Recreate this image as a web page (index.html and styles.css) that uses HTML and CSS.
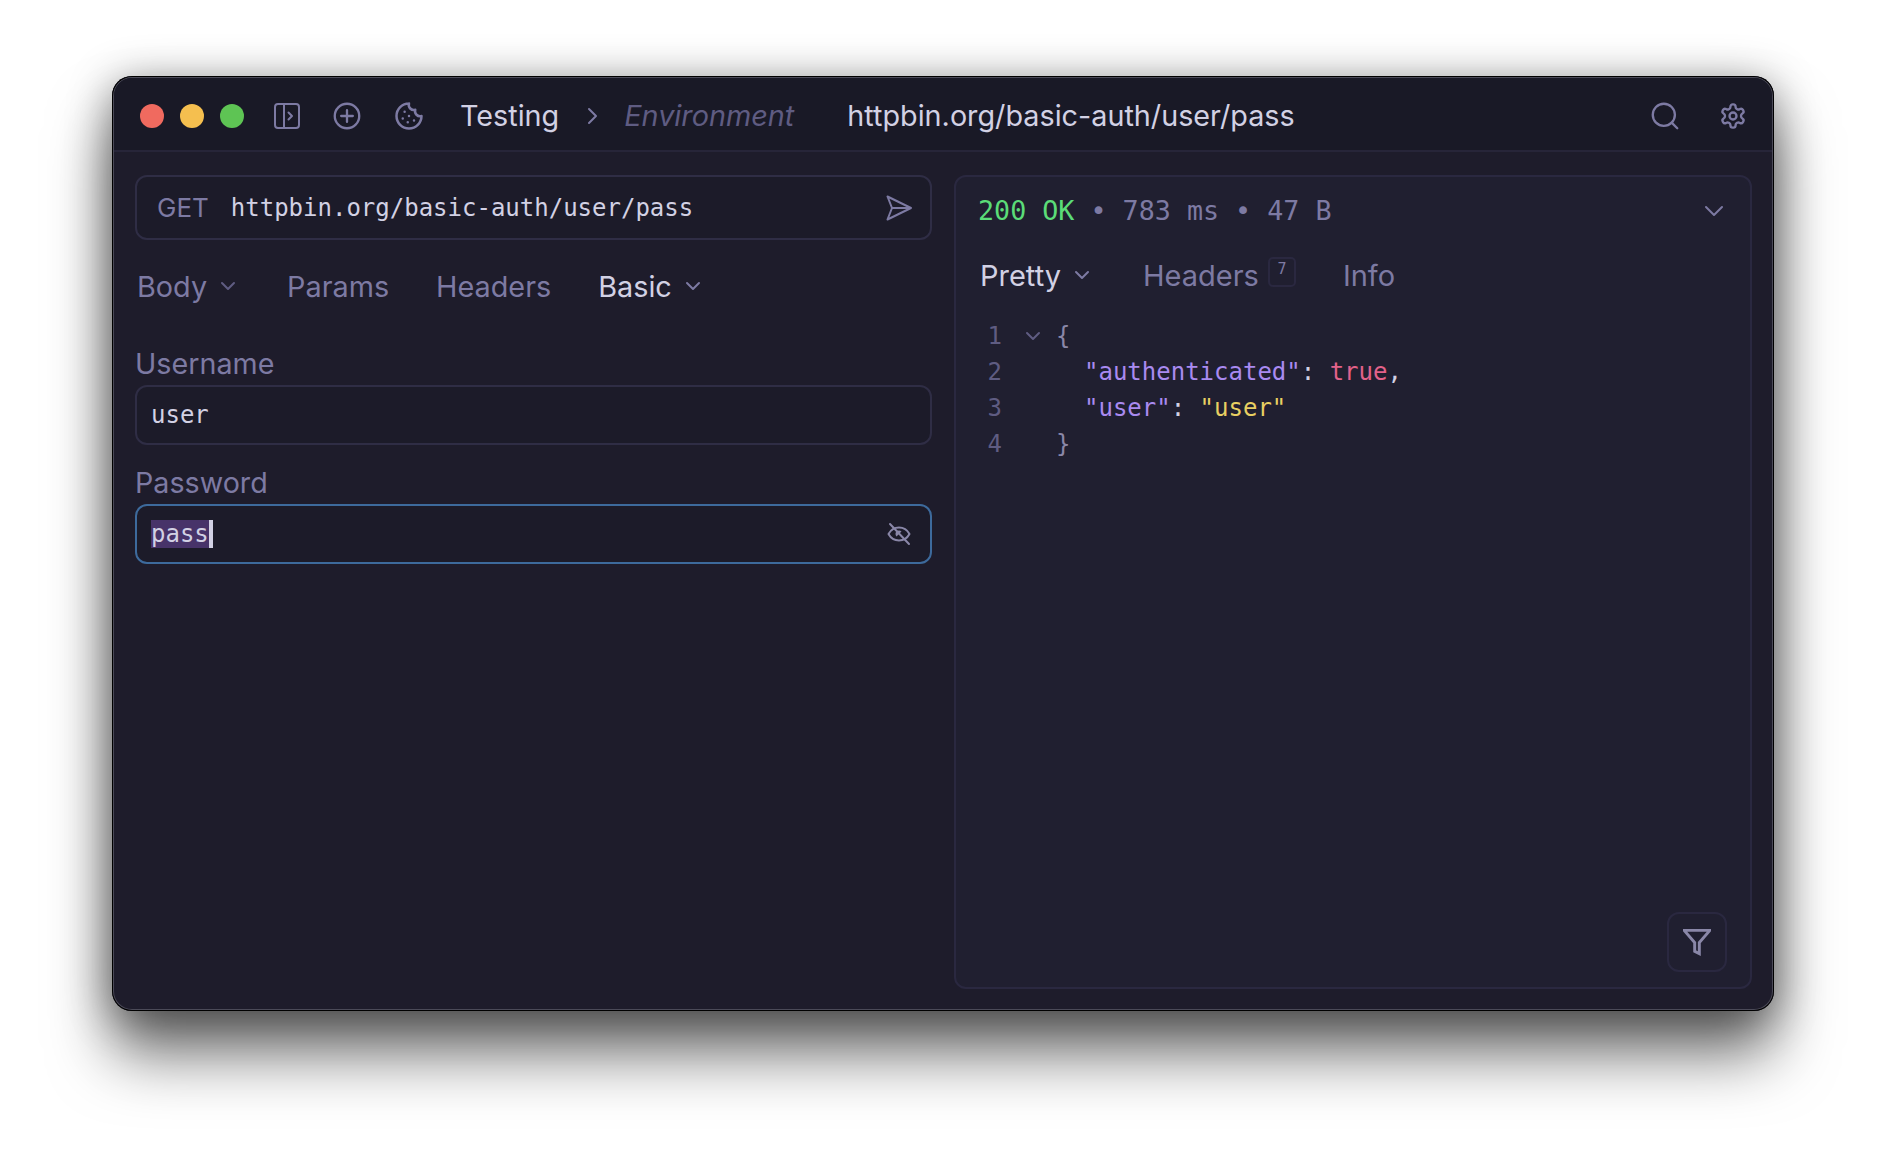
FILE: index.html
```html
<!DOCTYPE html>
<html lang="en">
<head>
  <meta charset="UTF-8" />
  <title>Yaak - Testing</title>
  <link rel="stylesheet" href="styles.css">
</head>
<body>
  <div class="window">
    <!-- Title bar -->
    <header class="titlebar">
      <div class="lights">
        <span class="light red"></span>
        <span class="light yellow"></span>
        <span class="light green"></span>
      </div>
      <svg class="icon icon-panel" viewBox="0 0 26 26"><rect x="1" y="1" width="24" height="24" rx="3"/><path d="M10 1v24M14.500 9.500 18 13l-3.500 3.500"/></svg>
      <svg class="icon icon-plus" viewBox="0 0 24 24"><circle cx="12" cy="12" r="10.500"/><path d="M12 7v10M7 12h10"/></svg>
      <svg class="icon icon-cookie" viewBox="0 0 24 24"><path d="M12 2a10 10 0 1 0 10 10 4 4 0 0 1-5-5 4 4 0 0 1-5-5"/><path d="M8.500 8.500v.01M16 15.500v.01M12 12v.01M11 17v.01M7 14v.01"/></svg>
      <span class="crumb">Testing</span>
      <svg class="icon icon-crumb" viewBox="0 0 12 20"><path d="m2 3 7 7-7 7"/></svg>
      <span class="crumb-env">Environment</span>
      <span class="crumb crumb-url">httpbin.org/basic-auth/user/pass</span>
      <svg class="icon icon-search" viewBox="0 0 24 24"><circle cx="11" cy="11" r="9.500"/><path d="m22.500 22.500-4.800-4.800"/></svg>
      <svg class="icon icon-gear" viewBox="0 0 24 24"><path d="M12.220 2h-.44a2 2 0 0 0-2 2v.18a2 2 0 0 1-1 1.730l-.43.25a2 2 0 0 1-2 0l-.15-.08a2 2 0 0 0-2.730.73l-.22.38a2 2 0 0 0 .73 2.730l.15.1a2 2 0 0 1 1 1.720v.51a2 2 0 0 1-1 1.740l-.15.09a2 2 0 0 0-.73 2.730l.22.38a2 2 0 0 0 2.730.73l.15-.08a2 2 0 0 1 2 0l.43.25a2 2 0 0 1 1 1.730V20a2 2 0 0 0 2 2h.44a2 2 0 0 0 2-2v-.18a2 2 0 0 1 1-1.730l.43-.25a2 2 0 0 1 2 0l.15.08a2 2 0 0 0 2.730-.73l.22-.39a2 2 0 0 0-.73-2.730l-.15-.08a2 2 0 0 1-1-1.740v-.5a2 2 0 0 1 1-1.740l.15-.09a2 2 0 0 0 .73-2.730l-.22-.38a2 2 0 0 0-2.730-.73l-.15.08a2 2 0 0 1-2 0l-.43-.25a2 2 0 0 1-1-1.730V4a2 2 0 0 0-2-2z"/><circle cx="12" cy="12" r="3"/></svg>
    </header>

    <main class="panes">
      <!-- Request side -->
      <section class="request">
        <div class="field url-bar">
          <span class="method">GET</span>
          <span class="mono">httpbin.org/basic-auth/user/pass</span>
          <svg class="icon icon-send" viewBox="0 0 26 26"><path d="M1.500 1.500 6 13 1.500 24.500 25 13ZM6 13h19"/></svg>
        </div>
        <nav class="tabs request-tabs">
          <span class="tab tab-body">Body<svg class="chev" viewBox="0 0 16 10"><path d="m2 2 6 6 6-6"/></svg></span>
          <span class="tab">Params</span>
          <span class="tab">Headers</span>
          <span class="tab active">Basic<svg class="chev" viewBox="0 0 16 10"><path d="m2 2 6 6 6-6"/></svg></span>
        </nav>
        <label class="label label-first">Username</label>
        <div class="field input"><span class="mono">user</span></div>
        <label class="label">Password</label>
        <div class="field input focused">
          <span class="mono"><span class="selected">pass</span><span class="caret"></span></span>
          <svg class="icon icon-eye" viewBox="0 0 24 24"><path d="M1.500 12C4 7.500 7.500 5.500 12 5.500s8 2 10.500 6.500c-2.500 4.500-6 6.500-10.500 6.500S4 16.500 1.500 12Z"/><path class="pupil" d="M12 8.500a3.500 3.500 0 0 0-3.500 3.500c0 1 .4 1.800 1 2.500l5-5c-.7-.6-1.500-1-2.500-1Z"/><path d="m3 2 19 20"/></svg>
        </div>
      </section>

      <!-- Response side -->
      <section class="response">
        <div class="status-row">
          <span class="status"><span class="ok">200 OK</span> • 783 ms • 47 B</span>
          <svg class="chev chev-status" viewBox="0 0 20 12"><path d="m2 2 8 8 8-8"/></svg>
        </div>
        <nav class="tabs response-tabs">
          <span class="tab tab-pretty active">Pretty<svg class="chev" viewBox="0 0 16 10"><path d="m2 2 6 6 6-6"/></svg></span>
          <span class="tab">Headers<span class="badge">7</span></span>
          <span class="tab">Info</span>
        </nav>
        <div class="code">
          <div class="line"><span class="num">1</span><svg class="chev chev-fold" viewBox="0 0 16 10"><path d="m2 2 6 6 6-6"/></svg><span class="punct">{</span></div>
          <div class="line"><span class="num">2</span><span class="indent"></span><span><span class="key">"authenticated"</span><span class="colon">:</span> <span class="bool">true</span><span class="colon">,</span></span></div>
          <div class="line"><span class="num">3</span><span class="indent"></span><span><span class="key">"user"</span><span class="colon">:</span> <span class="str">"user"</span></span></div>
          <div class="line"><span class="num">4</span><span class="gutter"></span><span class="punct">}</span></div>
        </div>
        <button class="filter-btn">
          <svg class="icon icon-filter" viewBox="0 0 24 24"><path d="M23 2H1l9 10.500V20l4 2v-9.500Z"/></svg>
        </button>
      </section>
    </main>
  </div>
</body>
</html>
```

FILE: styles.css
```css
html, body {
  margin: 0;
  height: 100%;
  background: #fff;
}
body {
  padding: 76px 0 0 112px;
  box-sizing: border-box;
  font-family: Inter, "Noto Sans", sans-serif;
  overflow: hidden;
}
.window {
  width: 1662px;
  height: 935px;
  box-sizing: border-box;
  display: flex;
  flex-direction: column;
  border-radius: 20px;
  overflow: hidden;
  background: #1e1c2b;
  box-shadow: inset 0 0 0 1px #000, inset 0 0 0 2px #4b4a58, 0 44px 62px rgba(0,0,0,0.55), 0 6px 44px rgba(0,0,0,0.42);
}
.icon {
  fill: none;
  stroke: #7d7aa3;
  stroke-width: 2;
  stroke-linecap: round;
  stroke-linejoin: round;
  flex: none;
}

/* Title bar */
.titlebar {
  height: 74px;
  flex: none;
  box-sizing: border-box;
  margin: 2px 2px 0;
  padding: 4px 25px 0 26px;
  display: flex;
  align-items: center;
  background: #191926;
  border-bottom: 2px solid #272539;
  border-radius: 18px 18px 0 0;
}
.lights {
  display: flex;
  gap: 16px;
}
.light {
  width: 24px;
  height: 24px;
  border-radius: 50%;
}
.red { background: #f06a5f; }
.yellow { background: #f5bf4f; }
.green { background: #5ec454; }
.icon-panel { width: 26px; height: 26px; margin-left: 30px; }
.icon-plus { width: 28px; height: 28px; margin-left: 33px; }
.icon-cookie { width: 30px; height: 30px; margin-left: 33px; }
.crumb {
  font-size: 28.750px;
  color: #d2d1e4;
  margin: -2px 0 0 36px;
  white-space: nowrap;
}
.icon-crumb { width: 12px; height: 20px; margin-left: 28px; }
.crumb-env {
  font-size: 28.800px;
  font-style: italic;
  color: #5f5c82;
  margin: -2px 0 0 25px;
  white-space: nowrap;
}
.crumb-url { margin-left: 53px; }
.icon-search { width: 28px; height: 28px; margin-left: auto; }
.icon-gear { width: 28px; height: 28px; margin-left: 40px; }

/* Panes */
.panes {
  flex: 1;
  min-height: 0;
  display: grid;
  grid-template-columns: 797px 798px;
  column-gap: 22px;
  padding: 23px 0 22px 23px;
}
.mono {
  font-family: "DejaVu Sans Mono", "Liberation Mono", monospace;
  font-size: 24px;
  color: #d2d1e4;
}
.field {
  box-sizing: border-box;
  display: flex;
  align-items: center;
  border: 2px solid #2f2d45;
  border-radius: 12px;
  padding: 0 14px;
}
.url-bar {
  height: 65px;
  background: #1c1b29;
  padding: 0 18px 0 20px;
}
.method {
  font-size: 26px;
  color: #7d7aa3;
  margin-right: 22px;
}
.icon-send { width: 26px; height: 26px; margin-left: auto; }
.tabs {
  display: flex;
  align-items: center;
  font-size: 29px;
  color: #7d7aa3;
}
.tab {
  display: flex;
  align-items: center;
  white-space: nowrap;
}
.tab.active { color: #d2d1e4; }
.chev {
  fill: none;
  stroke: #5f5c82;
  stroke-width: 2;
  stroke-linecap: round;
  stroke-linejoin: round;
  width: 16px;
  height: 10px;
  margin-left: 13px;
  flex: none;
}
.active .chev { stroke: #7d7aa3; }
.request-tabs {
  height: 40px;
  margin: 26px 0 0 2px;
  font-size: 28.800px;
  gap: 47px;
}
.tab-body { margin-right: 4px; }
.label {
  display: block;
  font-size: 28.700px;
  line-height: 34px;
  color: #7d7aa3;
  margin-top: 21px;
  height: 38px;
}
.label-first { margin-top: 41px; }
.input {
  height: 60px;
  background: #1c1b29;
}
.focused { border-color: #3d6a9c; padding-right: 14px; }
.selected { background: #473369; }
.caret {
  display: inline-block;
  width: 4px;
  height: 28px;
  background: #d2d1e4;
  vertical-align: -6px;
}
.icon-eye { width: 24px; height: 24px; margin-left: auto; margin-right: 5px; stroke: #8a87a8; }
.pupil { fill: #8a87a8; stroke: none; }

/* Response */
.response {
  position: relative;
  box-sizing: border-box;
  background: #201f30;
  border: 2px solid #2a2840;
  border-radius: 12px;
  padding: 0 26px 0 22px;
}
.status-row {
  height: 67px;
  display: flex;
  align-items: center;
}
.status {
  font-family: "DejaVu Sans Mono", "Liberation Mono", monospace;
  font-size: 26.700px;
  color: #7d7aa3;
  white-space: pre;
}
.ok { color: #5bdc78; }
.chev-status { width: 20px; height: 12px; margin-left: auto; stroke: #7d7aa3; }
.response-tabs {
  height: 40px;
  margin: 11px 0 0 2px;
  gap: 47px;
}
.tab-pretty { margin-right: 6px; }
.badge {
  box-sizing: border-box;
  width: 28px;
  height: 30px;
  margin: -6px 0 0 9px;
  border: 2px solid #2a2840;
  border-radius: 5px;
  font-family: "DejaVu Sans Mono", monospace;
  font-size: 15px;
  line-height: 20px;
  text-align: center;
  color: #7d7aa3;
}
.code {
  margin: 23px 0 0 0;
  font-family: "DejaVu Sans Mono", "Liberation Mono", monospace;
  font-size: 24px;
  line-height: 36px;
  color: #d2d1e4;
}
.line {
  display: flex;
  align-items: center;
  height: 36px;
  white-space: pre;
}
.num {
  width: 24px;
  text-align: right;
  color: #5f5c82;
  flex: none;
}
.chev-fold { margin: 0 15px 0 23px; }
.gutter { width: 62px; flex: none; }
.indent { width: 82px; flex: none; }
.punct { color: #8a87a8; margin-left: 0; }
.gutter + .punct { margin-left: -8px; }
.key { color: #a98af0; }
.colon { color: #d2d1e4; white-space: pre; }
.bool { color: #e3628a; }
.str { color: #e8cf62; }
.filter-btn {
  position: absolute;
  right: 23px;
  bottom: 15px;
  width: 60px;
  height: 60px;
  padding: 0;
  display: flex;
  align-items: center;
  justify-content: center;
  background: none;
  border: 2px solid #2a2840;
  border-radius: 12px;
}
.icon-filter { width: 28px; height: 28px; stroke: #8a87a8; stroke-linecap: butt; stroke-linejoin: miter; stroke-width: 2.500; }
```
